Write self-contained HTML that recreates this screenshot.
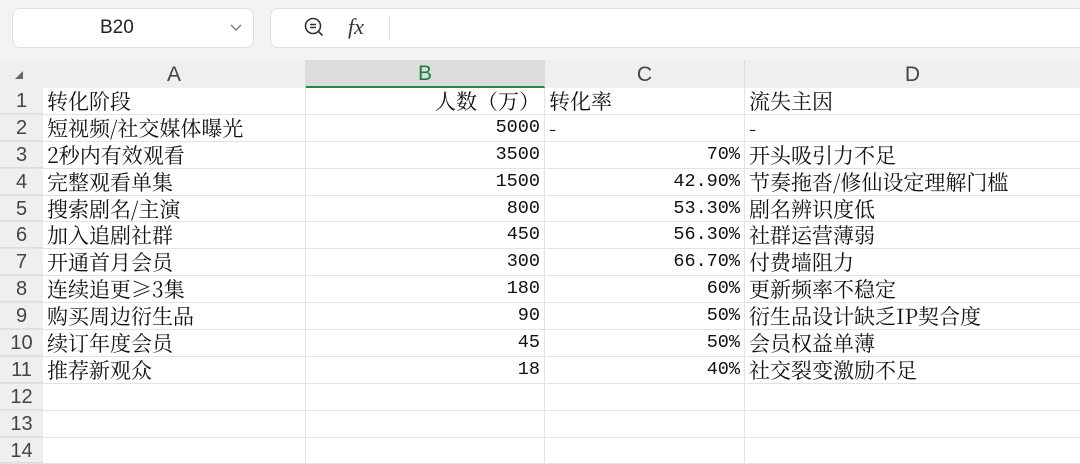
<!DOCTYPE html>
<html><head><meta charset="utf-8"><style>
*{margin:0;padding:0;box-sizing:border-box}
body{width:1080px;height:458px;overflow:hidden;background:#f3f3f3;position:relative;font-family:"Liberation Sans","Noto Sans CJK SC",sans-serif}
.box{position:absolute;background:#fff;border:1px solid #dedede;border-radius:8px}
#hdr{position:absolute;top:60px;left:0;width:1080px;height:28px;background:#efefef}
.ch{position:absolute;top:0;height:28px;line-height:29px;text-align:center;font-size:21px;color:#444;border-right:1px solid #dcdcdc}
#grid{position:absolute;top:88px;left:0;width:1080px}
.r{position:relative;height:26.9px;border-bottom:1px solid #e3e3e3;background:#fff}
.rh{position:absolute;left:0;top:0;width:43px;height:100%;background:#efefef;text-align:center;font-size:20px;line-height:26px;color:#444;border-bottom:1px solid #dcdcdc}
.c{position:absolute;top:0;height:100%;border-right:1px solid #e3e3e3;font-family:"Noto Serif CJK SC","Liberation Serif",serif;font-size:21px;line-height:26px;color:#111;white-space:nowrap;padding:0 4px}
.a{left:43px;width:263px}.b{left:306px;width:239px;text-align:right}.cc{left:545px;width:200px;text-align:right}.d{left:745px;width:335px;border-right:none}
.n{font-family:"Liberation Mono",monospace;font-size:18.5px}
.l{text-align:left}
</style></head><body>
<div class="box" style="left:12px;top:8px;width:242px;height:40px"></div>
<div style="position:absolute;left:100px;top:17px;font-size:19px;color:#222">B20</div>
<svg style="position:absolute;left:229px;top:22px" width="14" height="10"><path d="M2 3 L7 8 L12 3" fill="none" stroke="#777" stroke-width="1.3"/></svg>
<div class="box" style="left:270px;top:8px;width:830px;height:40px"></div>
<svg style="position:absolute;left:303px;top:16px" width="24" height="24"><circle cx="10" cy="10" r="7.5" fill="none" stroke="#333" stroke-width="1.6"/><path d="M7 8.5h6M7 11.5h6M15.5 15.5l4 4" stroke="#333" stroke-width="1.6" fill="none"/></svg>
<div style="position:absolute;left:348px;top:14px;font-family:'Liberation Serif',serif;font-style:italic;font-size:22px;color:#333">fx</div>
<div style="position:absolute;left:389px;top:16px;width:1px;height:24px;background:#e0e0e0"></div>
<div id="hdr">
<svg style="position:absolute;left:14px;top:10px" width="10" height="10"><path d="M9 1 L9 9 L1 9Z" fill="#666"/></svg>
<div class="ch" style="left:43px;width:263px">A</div>
<div class="ch" style="left:306px;width:239px;background:#dcdcdc;color:#1e7d45;border-bottom:2px solid #1e8a4a;line-height:28px">B</div>
<div class="ch" style="left:545px;width:200px">C</div>
<div class="ch" style="left:745px;width:335px;border-right:none">D</div>
</div>
<div id="grid">
<div class="r"><div class="rh">1</div><div class="c a">转化阶段</div><div class="c b">人数（万）</div><div class="c cc l">转化率</div><div class="c d">流失主因</div></div>
<div class="r"><div class="rh">2</div><div class="c a">短视频/社交媒体曝光</div><div class="c b n">5000</div><div class="c cc l">-</div><div class="c d">-</div></div>
<div class="r"><div class="rh">3</div><div class="c a">2秒内有效观看</div><div class="c b n">3500</div><div class="c cc n">70%</div><div class="c d">开头吸引力不足</div></div>
<div class="r"><div class="rh">4</div><div class="c a">完整观看单集</div><div class="c b n">1500</div><div class="c cc n">42.90%</div><div class="c d">节奏拖沓/修仙设定理解门槛</div></div>
<div class="r"><div class="rh">5</div><div class="c a">搜索剧名/主演</div><div class="c b n">800</div><div class="c cc n">53.30%</div><div class="c d">剧名辨识度低</div></div>
<div class="r"><div class="rh">6</div><div class="c a">加入追剧社群</div><div class="c b n">450</div><div class="c cc n">56.30%</div><div class="c d">社群运营薄弱</div></div>
<div class="r"><div class="rh">7</div><div class="c a">开通首月会员</div><div class="c b n">300</div><div class="c cc n">66.70%</div><div class="c d">付费墙阻力</div></div>
<div class="r"><div class="rh">8</div><div class="c a">连续追更≥3集</div><div class="c b n">180</div><div class="c cc n">60%</div><div class="c d">更新频率不稳定</div></div>
<div class="r"><div class="rh">9</div><div class="c a">购买周边衍生品</div><div class="c b n">90</div><div class="c cc n">50%</div><div class="c d">衍生品设计缺乏IP契合度</div></div>
<div class="r"><div class="rh">10</div><div class="c a">续订年度会员</div><div class="c b n">45</div><div class="c cc n">50%</div><div class="c d">会员权益单薄</div></div>
<div class="r"><div class="rh">11</div><div class="c a">推荐新观众</div><div class="c b n">18</div><div class="c cc n">40%</div><div class="c d">社交裂变激励不足</div></div>
<div class="r"><div class="rh">12</div><div class="c a"></div><div class="c b"></div><div class="c cc"></div><div class="c d"></div></div>
<div class="r"><div class="rh">13</div><div class="c a"></div><div class="c b"></div><div class="c cc"></div><div class="c d"></div></div>
<div class="r"><div class="rh">14</div><div class="c a"></div><div class="c b"></div><div class="c cc"></div><div class="c d"></div></div>
</div>
</body></html>
